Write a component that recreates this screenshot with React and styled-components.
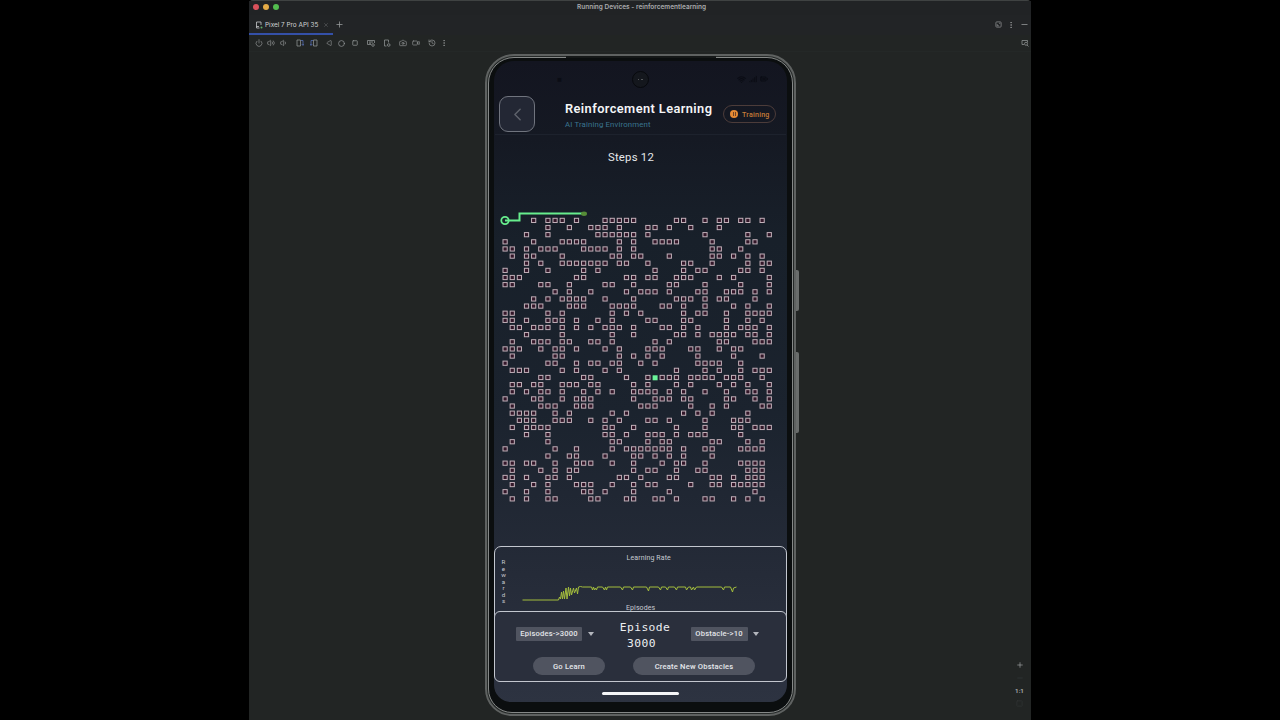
import React from "react";
import styled, { createGlobalStyle } from "styled-components";
import {
  BatteryFull,
  Camera,
  ChevronLeft,
  Circle,
  EllipsisVertical,
  History,
  Plus,
  Minus,
  Power,
  Signal,
  Square,
  Triangle,
  Video,
  Volume1,
  Volume2,
  Wifi,
  X,
} from "lucide-react";

const GlobalStyle = createGlobalStyle`
  * {
    box-sizing: border-box;
  }

  body {
    margin: 0;
    background: #000;
    font-family: Roboto, sans-serif;
    overflow: hidden;
  }

  svg {
    display: block;
    flex: none;
  }
`;

const Stage = styled.div`
  width: 1280px;
  height: 720px;
  display: flex;
  justify-content: center;
  background: #000;
`;

const IdeWindow = styled.div`
  width: 782px;
  height: 720px;
  display: flex;
  flex-direction: column;
  background: #222524;
  border-top: 1px solid #3f4242;
  border-radius: 4px 4px 0 0;
`;

const TitleBar = styled.div`
  height: 14px;
  display: flex;
  align-items: center;
  padding: 0 4px 2px;
  background: #212325;
`;

const Lights = styled.div`
  width: 120px;
  display: flex;
  gap: 4px;
`;

const Light = styled.span`
  width: 6px;
  height: 6px;
  border-radius: 50%;
  background: ${(props) => props.color};
`;

const WindowTitle = styled.div`
  flex: 1;
  text-align: center;
  padding-right: 117px;
  color: #a9abad;
  font-family: Inter, sans-serif;
  font-size: 6.5px;
  font-weight: 600;
  line-height: 12px;
`;

const TabBar = styled.div`
  height: 20px;
  display: flex;
  align-items: stretch;
  background: #222426;
`;

const DeviceTab = styled.div`
  width: 84px;
  display: flex;
  align-items: center;
  padding: 1px 0 0 6px;
  color: #d0d2d4;
  font-family: Inter, sans-serif;
  font-size: 6.4px;
  border-bottom: 2px solid #3450a8;
  white-space: nowrap;

  span {
    width: 58px;
    margin-left: 2px;
  }
`;

const TabActions = styled.div`
  flex: 1;
  display: flex;
  align-items: center;
  padding: 0 2px 1px 2px;
  color: #9b9d9f;
`;

const Spacer = styled.div`
  flex: 1;
`;

const ToolBar = styled.div`
  height: 17px;
  display: flex;
  align-items: center;
  padding: 0 2px 0 0;
  color: #929596;
  border-bottom: 1px solid #242827;
`;

const Tool = styled.span`
  display: flex;
  margin-left: ${(props) => props.$gap}px;
  transform: rotate(${(props) => props.$turn || 0}deg);
`;

const DeviceArea = styled.div`
  flex: 1;
  display: flex;
  align-items: flex-start;
  padding: 2px 0 0 236px;
`;

const PhoneFrame = styled.div`
  position: relative;
  width: 311px;
  height: 662px;
  padding: 1px;
  border: 2px solid #5f6261;
  border-radius: 29px 29px 27px 27px;
  background: #252928;
`;

const Bezel = styled.div`
  height: 100%;
  padding: 3px 5px 10px;
  border: 1px solid #858887;
  border-radius: 26px 26px 24px 24px;
  background: #0b0e0f;
`;

const SideKey = styled.span`
  position: absolute;
  left: 309px;
  top: ${(props) => props.$top}px;
  width: 3px;
  height: ${(props) => props.$height}px;
  border-radius: 0 2px 2px 0;
  background: #6a6d6c;
`;

const Antenna = styled.span`
  position: absolute;
  top: 0;
  left: 79px;
  width: 150px;
  height: 2px;
  background: #151818;
`;

const Screen = styled.div`
  height: 641px;
  display: flex;
  flex-direction: column;
  border-radius: 20px 20px 17px 17px;
  background: linear-gradient(#131520 0%, #151923 12%, #18202a 28%, #1b232e 55%, #252b38 80%, #2d3341 100%);
`;

const StatusBar = styled.div`
  height: 35px;
  display: flex;
  align-items: center;
  justify-content: space-between;
  padding: 2px 19px 0 18px;
  color: #0b0d15;
  font-size: 8px;
`;

const StatusSide = styled.div`
  width: 50px;
  display: flex;
  gap: 3px;
  justify-content: flex-end;
`;

const CameraHole = styled.div`
  width: 17px;
  height: 17px;
  display: flex;
  align-items: center;
  justify-content: center;
  gap: 2px;
  border: 1px solid #07090d;
  border-radius: 50%;
  background: #14171d;

  i {
    width: 1.5px;
    height: 1.5px;
    background: #55575b;
  }
`;

const Header = styled.header`
  height: 39px;
  display: flex;
  margin: 0 1px;
  padding-left: 4px;
  border-bottom: 1px solid #1d222d;
`;

const BackButton = styled.button`
  width: 36px;
  height: 36px;
  display: flex;
  align-items: center;
  justify-content: center;
  padding: 0;
  border: 1px solid #70747e;
  border-radius: 9px;
  background: #232734;
  color: #5e626b;
`;

const HeaderText = styled.div`
  width: 158px;
  margin-left: 30px;
  padding-top: 5px;
  white-space: nowrap;
`;

const Title = styled.h1`
  margin: 0;
  color: #f4f5f7;
  font-size: 12.8px;
  font-weight: 600;
  line-height: 16px;
  letter-spacing: 0.42px;
`;

const Subtitle = styled.div`
  margin-top: 1px;
  color: #3a7590;
  font-size: 7.8px;
  line-height: 13px;
  letter-spacing: 0.14px;
`;

const StatusPill = styled.div`
  width: 53px;
  height: 18px;
  display: flex;
  align-items: center;
  gap: 4px;
  margin-top: 9px;
  padding-left: 6px;
  border: 1px solid #4c3c3a;
  border-radius: 9px;
  color: #c57c38;
  font-size: 7.1px;
  font-weight: 500;
  letter-spacing: 0.22px;
`;

const PauseDot = styled.span`
  width: 8px;
  height: 8px;
  display: flex;
  align-items: center;
  justify-content: center;
  gap: 1px;
  border-radius: 50%;
  background: #e58a34;

  i {
    width: 1px;
    height: 4px;
    background: #6f4426;
  }
`;

const Steps = styled.div`
  height: 70px;
  padding: 14px 19px 0 0;
  color: #e6e8eb;
  font-size: 11.3px;
  line-height: 17px;
  letter-spacing: 0.25px;
  text-align: center;
`;

const ChartCard = styled.section`
  height: 71px;
  margin-top: auto;
  display: flex;
  border: 1px solid #c3c7cf;
  border-radius: 7px 7px 0 0;
  color: #c7cad1;
  font-size: 7px;
`;

const AxisLetters = styled.div`
  width: 17px;
  display: flex;
  flex-direction: column;
  align-items: center;
  padding-top: 12px;
  font-size: 6.2px;
  line-height: 6.5px;
`;

const ChartBody = styled.div`
  flex: 1;
  display: flex;
  flex-direction: column;
`;

const ChartTitle = styled.div`
  padding-left: 114.5px;
  line-height: 9px;
  margin-top: 7px;
  letter-spacing: 0.12px;
`;

const ChartFooter = styled.div`
  padding-left: 114px;
  line-height: 9px;
  letter-spacing: 0.1px;
`;

// overlaps the foot of the chart card
const ControlCard = styled.section`
  height: 71px;
  margin-top: -6px;
  display: flex;
  flex-direction: column;
  border: 1px solid #c3c7cf;
  border-radius: 6px;
  background: #2a2f3c;
`;

const ControlRow = styled.div`
  height: 44px;
  display: flex;
  align-items: center;
  padding-left: 21px;
`;

const Select = styled.div`
  width: ${(props) => props.$width}px;
  height: 14px;
  border-radius: 1px;
  background: #505460;
  color: #e3e5e9;
  font-size: 7.6px;
  font-weight: 500;
  line-height: 14px;
  letter-spacing: 0.18px;
  text-align: center;
`;

const Caret = styled.span`
  margin-left: 5.5px;
  border: 3.5px solid transparent;
  border-top: 4px solid #b3b6bd;
  border-bottom: 0;
`;

const EpisodeCount = styled.div`
  width: 97px;
  padding: 4px 0 0 6px;
  color: #eceef1;
  font-family: "DejaVu Sans Mono", monospace;
  font-size: 11.3px;
  line-height: 16px;
  letter-spacing: 0.4px;
  text-align: center;
`;

const EpisodeValue = styled.div`
  padding-right: 7px;
`;

const ButtonRow = styled.div`
  display: flex;
  gap: 28px;
  padding: 1px 0 0 38px;
`;

const PillButton = styled.button`
  width: ${(props) => props.$width}px;
  height: 18px;
  padding: 0;
  border: 0;
  border-radius: 9px;
  background: #505460;
  color: #e6e8ec;
  font-family: inherit;
  font-size: 7.6px;
  font-weight: 500;
  letter-spacing: 0.18px;
`;

const HomeBar = styled.div`
  height: 20px;
  display: flex;
  justify-content: center;
  padding-top: 10px;

  span {
    width: 77px;
    height: 3px;
    border-radius: 2px;
    background: #f5f6f8;
  }
`;

const ZoomControls = styled.div`
  width: 12px;
  display: flex;
  flex-direction: column;
  align-items: center;
  gap: 5px;
  margin: 606.5px 0 0 217.5px;
  color: #a4a6a7;
  font-size: 6.2px;
  font-weight: 700;
  line-height: 8px;
`;

const Faint = styled.span`
  color: #353939;
`;

const CELL = 7.14;

// obstacle columns for every maze row
const OBSTACLES = [
  [4, 6, 7, 8, 10, 14, 15, 16, 17, 18, 24, 25, 28, 30, 31, 33, 34, 36],
  [6, 9, 12, 13, 14, 16, 20, 21, 23, 26, 30],
  [3, 6, 13, 14, 15, 16, 17, 18, 20, 28, 34, 37],
  [0, 4, 8, 9, 10, 11, 16, 18, 21, 22, 23, 24, 29, 34, 35],
  [0, 1, 3, 5, 6, 7, 11, 12, 13, 14, 16, 18, 29, 30, 33],
  [1, 3, 4, 8, 15, 16, 18, 19, 23, 29, 30, 32, 34, 36],
  [3, 5, 8, 9, 10, 11, 12, 13, 14, 16, 17, 20, 25, 26, 29, 34, 36, 37],
  [0, 3, 6, 11, 13, 21, 25, 27, 28, 33, 34, 36],
  [0, 1, 2, 10, 11, 17, 18, 20, 21, 24, 25, 26, 30, 32, 37],
  [0, 1, 5, 6, 9, 14, 15, 18, 23, 24, 28, 33, 37],
  [7, 9, 12, 17, 19, 20, 21, 23, 27, 28, 31, 32, 33, 35, 37],
  [4, 6, 8, 9, 10, 11, 14, 18, 24, 25, 26, 28, 30, 31, 35],
  [3, 4, 5, 9, 10, 11, 15, 16, 17, 18, 22, 23, 25, 28, 32, 34, 37],
  [0, 1, 6, 8, 15, 17, 19, 25, 27, 28, 31, 34, 35, 36, 37],
  [0, 1, 3, 6, 7, 8, 10, 13, 15, 20, 21, 25, 26, 31, 34, 36],
  [1, 2, 4, 5, 6, 8, 10, 12, 14, 15, 16, 18, 22, 23, 25, 27, 31, 33, 34, 35, 37],
  [3, 8, 15, 18, 24, 25, 27, 29, 30, 31, 32, 34, 35, 37],
  [1, 4, 5, 6, 8, 9, 12, 13, 15, 21, 23, 30, 31, 35, 36, 37],
  [0, 1, 2, 5, 7, 8, 10, 14, 16, 20, 21, 22, 26, 27, 30, 32, 33],
  [1, 7, 8, 16, 18, 20, 22, 27, 32, 36],
  [0, 6, 7, 10, 12, 13, 15, 16, 19, 21, 27, 28, 29, 30, 33],
  [1, 2, 3, 8, 10, 14, 16, 24, 28, 30, 33, 35, 36, 37],
  [5, 6, 11, 12, 17, 20, 22, 23, 24, 26, 27, 28, 29, 31, 32, 33, 36],
  [1, 2, 4, 5, 8, 9, 10, 12, 13, 18, 20, 24, 26, 30, 32, 34, 37],
  [1, 3, 5, 6, 8, 11, 13, 15, 18, 19, 20, 21, 23, 25, 28, 31, 34, 35, 37],
  [0, 4, 5, 8, 10, 11, 12, 18, 21, 22, 23, 25, 26, 31, 32, 35, 37],
  [1, 5, 6, 7, 10, 11, 12, 19, 20, 21, 26, 29, 31, 36, 37],
  [1, 2, 3, 4, 7, 9, 15, 17, 25, 27, 29, 34],
  [2, 3, 4, 7, 8, 9, 12, 14, 16, 20, 21, 23, 28, 32, 33, 34],
  [1, 3, 4, 5, 6, 14, 15, 18, 24, 28, 32, 33, 35, 36, 37],
  [3, 6, 14, 15, 17, 20, 21, 22, 24, 26, 27, 28, 33],
  [1, 6, 15, 16, 20, 22, 23, 29, 30, 34, 36],
  [0, 7, 10, 15, 17, 18, 19, 20, 21, 22, 23, 25, 28, 29, 33, 34, 35, 36],
  [6, 9, 10, 14, 18, 19, 21, 23, 25, 29],
  [0, 1, 3, 4, 7, 10, 11, 12, 15, 18, 22, 24, 25, 28, 33, 34, 35, 36],
  [1, 5, 7, 9, 10, 18, 20, 21, 24, 27, 28, 34, 35, 36],
  [0, 1, 3, 6, 7, 9, 16, 17, 19, 23, 24, 29, 30, 32, 34, 35, 36],
  [1, 4, 6, 10, 11, 12, 15, 18, 20, 21, 26, 29, 30, 32, 33, 34, 35, 36],
  [0, 3, 6, 11, 12, 14, 18, 23, 35],
  [1, 3, 6, 7, 12, 13, 17, 18, 21, 22, 24, 28, 29, 32, 34, 36],
];

const REWARDS =
  "0,22 36,22 37,19 38,21 39,14 40,21 41,13 42,21 43.5,10 44.5,21 46,9 47,18 48,10 49,17 51,10 52,15 54,10 55,16 56,9 58,8.5 60,9 69,9 70,12 71,9 72,12 73,10 74,12 75,9 80,9 82,12 83,9 84,12 85,9 98,9 100,12 101,9 108,9 110,12 111,9 124,9 126,13 127,9 136,9 138,12 139,9 143,9 145,12 146,9 152,9 154,12 155,9 163,9 164,12 166,9 168,9 169,12 171,9 172,12 174,9 199,9 201,12 202,9 208,9 210,14 211,10 214,9";

function Maze() {
  return (
    <svg width="293" height="300" viewBox="0 0 293 300">
      {OBSTACLES.map((cols, row) =>
        cols.map((col) => (
          <rect
            key={`${row}-${col}`}
            x={9 + col * CELL}
            y={13.3 + row * CELL}
            width="4.2"
            height="4.2"
            fill="#321628"
            stroke="#c2b0b9"
            strokeWidth="1"
          />
        ))
      )}
      <rect x="158.6" y="170.3" width="5" height="5" fill="#6af59a" />
      <path d="M11 15.5h14.5v-7H90" fill="none" stroke="#67ed8d" strokeWidth="2" />
      <circle cx="11" cy="15.5" r="3.7" fill="none" stroke="#67ed8d" strokeWidth="1.8" />
      <ellipse cx="90" cy="8.7" rx="3" ry="2.2" fill="#568c37" />
    </svg>
  );
}

function RewardChart() {
  return (
    <svg width="260" height="41" viewBox="0 0 260 41">
      <g transform="translate(10.5 15)">
        <polyline points={REWARDS} fill="none" stroke="#a3bd3d" strokeWidth="1" />
      </g>
    </svg>
  );
}

function LineIcon({ size = 8, children }) {
  return (
    <svg width={size} height={size} viewBox="0 0 16 16" fill="none" stroke="currentColor" strokeWidth="1.5">
      {children}
    </svg>
  );
}

function DeviceIcon() {
  return (
    <LineIcon>
      <path d="M12 8V2H3v12h6M3 11h5" />
      <circle cx="13" cy="13" r="2" fill="#5fad65" stroke="none" />
    </LineIcon>
  );
}

function RotateIcon({ flip }) {
  return (
    <LineIcon>
      <g transform={flip ? "matrix(-1 0 0 1 16 0)" : undefined}>
        <path d="M2 2h7v12H2z" />
        <path d="M10 3h4v9M11.5 10l2.5 3 2-3" stroke="#5872b8" />
      </g>
    </LineIcon>
  );
}

function DisplayGearIcon() {
  return (
    <LineIcon>
      <path d="M8 11H1V3h14v5M4 6h8M4 8.5h4" />
      <circle cx="12" cy="12" r="2.6" />
    </LineIcon>
  );
}

function PhoneGearIcon() {
  return (
    <LineIcon>
      <path d="M7 14H3V2h8v5" />
      <circle cx="11.5" cy="12" r="2.6" />
    </LineIcon>
  );
}

function InspectIcon() {
  return (
    <LineIcon>
      <path d="M6 11H2V3h11v4" />
      <circle cx="10" cy="9.5" r="3" />
      <path d="M12 12l3 3" />
    </LineIcon>
  );
}

function FloatIcon() {
  return (
    <LineIcon size={7}>
      <rect x="2" y="2" width="12" height="12" rx="2" />
      <path d="M5 7v4h4M9.5 5H11v1.5" />
    </LineIcon>
  );
}

function IdeChrome() {
  return (
    <>
      <TitleBar>
        <Lights>
          <Light color="#d9515b" />
          <Light color="#e5ab46" />
          <Light color="#53bd4f" />
        </Lights>
        <WindowTitle>Running Devices - reinforcementlearning</WindowTitle>
      </TitleBar>
      <TabBar>
        <DeviceTab>
          <DeviceIcon />
          <span>Pixel 7 Pro API 35</span>
          <X size={6} color="#686b6d" />
        </DeviceTab>
        <TabActions>
          <Plus size={9} />
          <Spacer />
          <FloatIcon />
          <Tool $gap={5}>
            <EllipsisVertical size={8} />
          </Tool>
          <Tool $gap={5}>
            <Minus size={9} />
          </Tool>
        </TabActions>
      </TabBar>
      <ToolBar>
        <Tool $gap={5.5}><Power size={8} /></Tool>
        <Tool $gap={4.5}><Volume2 size={8} /></Tool>
        <Tool $gap={4.5}><Volume1 size={8} /></Tool>
        <Tool $gap={8.5}><RotateIcon /></Tool>
        <Tool $gap={5.5}><RotateIcon flip /></Tool>
        <Tool $gap={8.5} $turn={-90}><Triangle size={6} strokeWidth={2.5} /></Tool>
        <Tool $gap={6}><Circle size={7} strokeWidth={2.5} /></Tool>
        <Tool $gap={6.5}><Square size={6} strokeWidth={3} /></Tool>
        <Tool $gap={9}><DisplayGearIcon /></Tool>
        <Tool $gap={8.5}><PhoneGearIcon /></Tool>
        <Tool $gap={7.5}><Camera size={8} /></Tool>
        <Tool $gap={5}><Video size={8} /></Tool>
        <Tool $gap={8}><History size={8} /></Tool>
        <Tool $gap={4.5}><EllipsisVertical size={8} /></Tool>
        <Spacer />
        <InspectIcon />
      </ToolBar>
    </>
  );
}

function AppHeader() {
  return (
    <Header>
      <BackButton>
        <ChevronLeft size={21} strokeWidth={1.7} />
      </BackButton>
      <HeaderText>
        <Title>Reinforcement Learning</Title>
        <Subtitle>AI Training Environment</Subtitle>
      </HeaderText>
      <StatusPill>
        <PauseDot>
          <i />
          <i />
        </PauseDot>
        Training
      </StatusPill>
    </Header>
  );
}

function LearningCard() {
  return (
    <ChartCard>
      <AxisLetters>
        {"Rewards".split("").map((letter, i) => (
          <span key={i}>{letter}</span>
        ))}
      </AxisLetters>
      <ChartBody>
        <ChartTitle>Learning Rate</ChartTitle>
        <RewardChart />
        <ChartFooter>Episodes</ChartFooter>
      </ChartBody>
    </ChartCard>
  );
}

function Controls() {
  return (
    <ControlCard>
      <ControlRow>
        <Select $width={66}>Episodes-&gt;3000</Select>
        <Caret />
        <EpisodeCount>
          Episode
          <EpisodeValue>3000</EpisodeValue>
        </EpisodeCount>
        <Select $width={57}>Obstacle-&gt;10</Select>
        <Caret />
      </ControlRow>
      <ButtonRow>
        <PillButton $width={72}>Go Learn</PillButton>
        <PillButton $width={122}>Create New Obstacles</PillButton>
      </ButtonRow>
    </ControlCard>
  );
}

export default function App() {
  return (
    <>
      <GlobalStyle />
      <Stage>
        <IdeWindow>
          <IdeChrome />
          <DeviceArea>
            <PhoneFrame>
              <Antenna />
              <SideKey $top={214} $height={41} />
              <SideKey $top={296} $height={81} />
              <Bezel>
                <Screen>
                  <StatusBar>
                    <StatusSide>■</StatusSide>
                    <CameraHole>
                      <i />
                      <i />
                    </CameraHole>
                    <StatusSide>
                      <Wifi size={9} strokeWidth={3} />
                      <Signal size={8} strokeWidth={3} />
                      <BatteryFull size={8} strokeWidth={3} />
                    </StatusSide>
                  </StatusBar>
                  <AppHeader />
                  <Steps>Steps 12</Steps>
                  <Maze />
                  <LearningCard />
                  <Controls />
                  <HomeBar>
                    <span />
                  </HomeBar>
                </Screen>
              </Bezel>
            </PhoneFrame>
            <ZoomControls>
              <Plus size={8} />
              <Faint>
                <Minus size={8} />
              </Faint>
              <span>1:1</span>
              <Faint>
                <Square size={7} />
              </Faint>
            </ZoomControls>
          </DeviceArea>
        </IdeWindow>
      </Stage>
    </>
  );
}
